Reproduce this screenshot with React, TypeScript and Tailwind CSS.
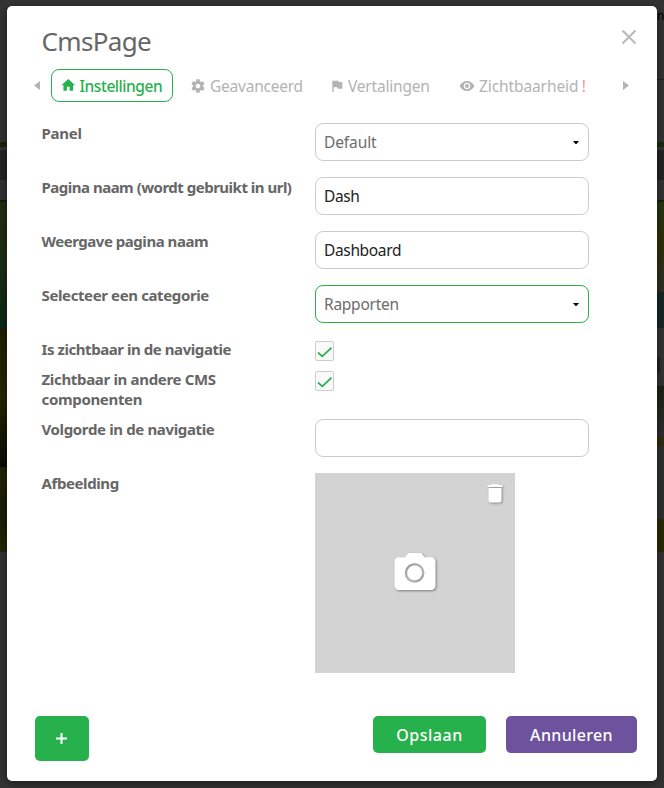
import type { ReactNode } from "react";

const paths = {
  home: "M10 20v-6h4v6h5v-8h3L12 3 2 12h3v8z",
  gear: "M19.43 12.98c.04-.32.07-.64.07-.98s-.03-.66-.07-.98l2.11-1.65c.19-.15.24-.42.12-.64l-2-3.46c-.12-.22-.39-.3-.61-.22l-2.49 1c-.52-.4-1.08-.73-1.69-.98l-.38-2.65A.488.488 0 0 0 14 2h-4c-.25 0-.46.18-.49.42l-.38 2.65c-.61.25-1.17.59-1.69.98l-2.49-1c-.23-.09-.49 0-.61.22l-2 3.46c-.13.22-.07.49.12.64l2.11 1.65c-.04.32-.07.65-.07.98s.03.66.07.98l-2.11 1.65c-.19.15-.24.42-.12.64l2 3.46c.12.22.39.3.61.22l2.49-1c.52.4 1.08.73 1.69.98l.38 2.65c.03.24.24.42.49.42h4c.25 0 .46-.18.49-.42l.38-2.65c.61-.25 1.17-.59 1.69-.98l2.49 1c.23.09.49 0 .61-.22l2-3.46c.12-.22.07-.49-.12-.64l-2.11-1.65zM12 15.5c-1.93 0-3.5-1.57-3.5-3.5s1.57-3.5 3.5-3.5 3.5 1.57 3.5 3.5-1.57 3.5-3.5 3.5z",
  flag: "M14.4 6L14 4H5v17h2v-7h5.6l.4 2h7V6z",
  eye: "M12 4.5C7 4.5 2.73 7.61 1 12c1.73 4.39 6 7.5 11 7.5s9.27-3.11 11-7.5c-1.73-4.39-6-7.5-11-7.5zM12 17c-2.76 0-5-2.24-5-5s2.24-5 5-5 5 2.24 5 5-2.24 5-5 5zm0-8c-1.66 0-3 1.34-3 3s1.34 3 3 3 3-1.34 3-3-1.34-3-3-3z",
};

function Icon({ d, className }: { d: string; className: string }) {
  return (
    <svg viewBox="0 0 24 24" fill="currentColor" className={`shrink-0 ${className}`}>
      <path d={d} />
    </svg>
  );
}

function Row({ label, spacing, height, children }: { label: string; spacing: string; height: string; children: ReactNode }) {
  return (
    <div className={`flex items-start ${height}`}>
      <div className={`w-[274px] shrink-0 pr-4 pl-[0.5px] text-[15px] leading-5 font-bold text-[#666] ${spacing}`}>{label}</div>
      {children}
    </div>
  );
}

function Field({ value = "", select = false, active = false, spacing = "" }: { value?: string; select?: boolean; active?: boolean; spacing?: string }) {
  return (
    <div
      className={`flex h-[38px] w-[274px] items-center justify-between rounded-lg border pr-[9px] pl-2 text-[15.5px] ${active ? "border-[#26b14c]" : "border-[#ccc]"} ${select ? "text-[#6c6c6c]" : "text-[#222]"}`}
    >
      <span className={`pt-[2px] ${spacing}`}>{value}</span>
      {select && (
        <svg className="h-[3px] w-[6px] text-black" viewBox="0 0 6 3" fill="currentColor">
          <path d="M0 0h6L3.500 3h-1z" />
        </svg>
      )}
    </div>
  );
}

function Check() {
  return (
    <div className="mt-[2px] flex h-5 w-[19px] items-center justify-center rounded-[2px] border border-[#ccc] bg-[#fafafa]">
      <svg className="h-[18px] w-[17px]" viewBox="0 0 17 18" fill="none" stroke="#26b14c" strokeWidth="1.7">
        <path d="M2 10.5l4.3 3.8L15.5 5.6" />
      </svg>
    </div>
  );
}

function Backdrop() {
  return (
    <div className="absolute inset-0 flex justify-between bg-[#333]">
      <div className="flex w-[7px] flex-col">
        <div className="h-[142px]" />
        <div className="h-[5px] bg-[#18240d]" />
        <div className="h-[3px]" />
        <div className="h-[30px] bg-[#242424]" />
        <div className="h-[20px]" />
        <div className="h-[2px] bg-[#14200a]" />
        <div className="h-[126px] bg-linear-to-b from-[#222e12] via-[#1b2d13] to-[#0a2915]" />
        <div className="h-[139px] bg-linear-to-b from-[#1e1f02] via-[#262704] to-[#080b02]" />
        <div className="h-[85px] bg-linear-to-b from-[#222404] via-[#191c06] to-[#232804]" />
      </div>
      <div className="flex w-[7px] flex-col">
        <div className="h-[80px] border-b border-[#222] text-[12px] leading-8 text-black">n</div>
        <div className="h-[62px]" />
        <div className="h-[5px] bg-[#19280d]" />
        <div className="h-[3px]" />
        <div className="h-[30px] bg-[#242424]" />
        <div className="h-[20px]" />
        <div className="h-[2px] bg-[#14200a]" />
        <div className="h-[90px] bg-linear-to-b from-[#26330f] via-[#2c3008] to-[#2d2f24]" />
        <div className="h-[36px] bg-[#152723]" />
        <div className="h-[29px]" />
        <div className="flex h-[16px]">
          <div className="w-[3px] rounded-r-[2px] bg-[#222]" />
        </div>
        <div className="h-[13px]" />
        <div className="h-[50px] bg-linear-to-b from-[#1a2213] to-[#2e2e2e]" />
        <div className="h-[10px] bg-[#2b2f10]" />
        <div className="h-[73px] bg-[#2e2f2f]" />
        <div className="h-[33px] bg-[#262b05]" />
      </div>
    </div>
  );
}

export default function App() {
  return (
    <div className="relative h-[788px] w-[664px] overflow-hidden px-[7px] pt-[6px] font-['Noto_Sans',sans-serif]">
      <Backdrop />
      <main className="relative flex h-[775px] flex-col rounded-[5px] bg-white shadow-[0_2px_8px_rgba(0,0,0,0.45)]">
        <header className="flex h-[63px] items-start justify-between pr-[20px] pl-[34.5px]">
          <h1 className="pt-[17px] text-[26px] leading-9 tracking-[-0.65px] text-[#666]">CmsPage</h1>
          <svg className="mt-[23px] size-4" viewBox="0 0 16 16" stroke="#bbb" strokeWidth="2.2">
            <path d="M1.500 1.500l13 13M14.500 1.500l-13 13" />
          </svg>
        </header>
        <nav className="flex h-[33px] items-center pl-[27px] text-[15.5px] text-[#b3b3b3]">
          <svg className="mr-[11px] h-[9px] w-[6px] shrink-0" viewBox="0 0 6 9" fill="currentColor"><path d="M6 0v9L0 4.5z" /></svg>
          <div className="flex h-[33px] w-[122px] shrink-0 items-center rounded-lg border border-[#26b14c] pl-[8px] text-[#26b14c]">
            <Icon d={paths.home} className="mr-[3px] size-[16.5px]" />
            <span className="pt-[2px] font-medium tracking-[-0.45px]">Instellingen</span>
          </div>
          <div className="flex w-[140px] shrink-0 items-center pl-[17px]">
            <Icon d={paths.gear} className="mr-[4px] size-4" />
            <span className="pt-[2px] tracking-[-0.23px]">Geavanceerd</span>
          </div>
          <div className="flex w-[128px] shrink-0 items-center pl-[16px]">
            <Icon d={paths.flag} className="mr-[3px] size-4" />
            <span className="pt-[2px] tracking-[-0.2px]">Vertalingen</span>
          </div>
          <div className="flex w-[182px] shrink-0 items-center pl-[18px]">
            <Icon d={paths.eye} className="mr-[4px] size-4" />
            <span className="pt-[2px] tracking-[-0.1px]">Zichtbaarheid</span>
            <span className="ml-[3.5px] pt-[2px] text-[#ff8f8f]">!</span>
          </div>
          <svg className="h-[9px] w-[6px] shrink-0" viewBox="0 0 6 9" fill="currentColor"><path d="M0 0l6 4.5L0 9z" /></svg>
        </nav>
        <section className="flex h-[608px] flex-col pt-[21px] pl-[34px]">
          <Row label="Panel" spacing="tracking-[-0.25px]" height="h-[54px]"><Field value="Default" select spacing="tracking-[-0.1px]" /></Row>
          <Row label="Pagina naam (wordt gebruikt in url)" spacing="tracking-[-0.5px] whitespace-nowrap" height="h-[54px]"><Field value="Dash" spacing="tracking-[-0.4px]" /></Row>
          <Row label="Weergave pagina naam" spacing="tracking-[-0.47px]" height="h-[54px]"><Field value="Dashboard" spacing="tracking-[-0.35px]" /></Row>
          <Row label="Selecteer een categorie" spacing="tracking-[-0.38px]" height="h-[54px]"><Field value="Rapporten" select active spacing="tracking-[-0.25px]" /></Row>
          <Row label="Is zichtbaar in de navigatie" spacing="tracking-[-0.44px]" height="h-[30px]"><Check /></Row>
          <Row label="Zichtbaar in andere CMS componenten" spacing="tracking-[-0.33px]" height="h-[50px]"><Check /></Row>
          <Row label="Volgorde in de navigatie" spacing="tracking-[-0.36px]" height="h-[54px]"><Field /></Row>
          <Row label="Afbeelding" spacing="tracking-[-0.4px]" height="h-[200px]">
            <div className="relative flex size-[200px] items-center justify-center bg-[#d3d3d3] pb-[3px] text-white">
              <svg className="absolute top-[11px] right-[12px] h-[19px] w-[16px] drop-shadow-[1px_1px_1px_rgba(0,0,0,0.35)]" viewBox="0 0 16 19" fill="currentColor">
                <path d="M5 0h6l1 1h3.500v2H.5V1H4zM1.500 4h13v12.500a2 2 0 0 1-2 2h-9a2 2 0 0 1-2-2z" />
              </svg>
              <svg className="h-[38px] w-[42px] drop-shadow-[1px_1px_1px_rgba(0,0,0,0.4)]" viewBox="0 0 42 38" fill="currentColor">
                <path fillRule="evenodd" d="M14.700 0L10.900 4.200H4.700A4.200 4.200 0 0 0 .5 8.400v24.300a4.200 4.200 0 0 0 4.200 4.200h32.600a4.200 4.200 0 0 0 4.200-4.200V8.400a4.200 4.200 0 0 0-4.200-4.200h-6.700L27.300 0zM20.700 10.200a9.800 9.800 0 1 1 0 19.600a9.800 9.800 0 0 1 0-19.600z" />
                <circle cx="20.7" cy="20" r="7.500" />
              </svg>
            </div>
          </Row>
        </section>
        <footer className="flex items-start pt-[6px] pl-[28px] font-medium text-white">
          <button className="flex h-[45px] w-[54px] items-center justify-center rounded-[5px] bg-[#26b14c] pr-[2px] pb-px">
            <svg className="size-[11px]" viewBox="0 0 11 11" stroke="white" strokeWidth="2"><path d="M0 5.500h11M5.500 0v11" /></svg>
          </button>
          <button className="ml-[284px] h-[37px] w-[113px] rounded-[5px] bg-[#26b14c] text-base tracking-[0.5px]">Opslaan</button>
          <button className="ml-[20px] h-[37px] w-[131px] rounded-[5px] bg-[#6d529d] text-base tracking-[0.35px]">Annuleren</button>
        </footer>
      </main>
    </div>
  );
}
